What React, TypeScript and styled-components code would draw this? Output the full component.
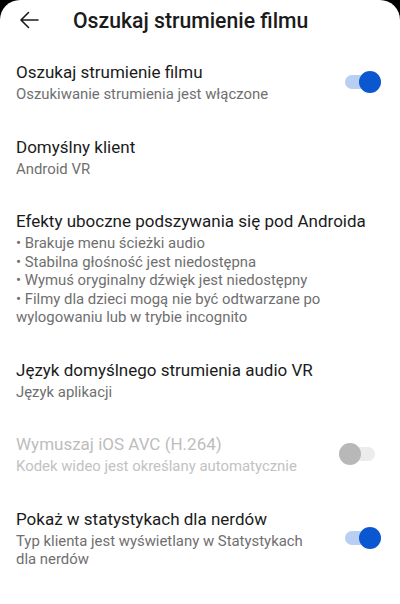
import { createGlobalStyle, styled } from "styled-components";

const GlobalStyle = createGlobalStyle`
  html, body {
    margin: 0;
    padding: 0;
    background: #000;
  }
  body {
    font-family: Roboto, "Noto Sans", "Liberation Sans", sans-serif;
  }
`;

interface Setting {
  title: string;
  lines: string[];
  toggle?: boolean;
  disabled?: boolean;
}

const settings: Setting[] = [
  {
    title: "Oszukaj strumienie filmu",
    lines: ["Oszukiwanie strumienia jest włączone"],
    toggle: true,
  },
  { title: "Domyślny klient", lines: ["Android VR"] },
  {
    title: "Efekty uboczne podszywania się pod Androida",
    lines: [
      "• Brakuje menu ścieżki audio",
      "• Stabilna głośność jest niedostępna",
      "• Wymuś oryginalny dźwięk jest niedostępny",
      "• Filmy dla dzieci mogą nie być odtwarzane po wylogowaniu lub w trybie incognito",
    ],
  },
  { title: "Język domyślnego strumienia audio VR", lines: ["Język aplikacji"] },
  {
    title: "Wymuszaj iOS AVC (H.264)",
    lines: ["Kodek wideo jest określany automatycznie"],
    toggle: false,
    disabled: true,
  },
  {
    title: "Pokaż w statystykach dla nerdów",
    lines: ["Typ klienta jest wyświetlany w Statystykach dla nerdów"],
    toggle: true,
  },
];

export default function App() {
  return (
    <>
      <GlobalStyle />
      <Screen>
        <Header>
          <BackButton>
            <svg width="20" height="20" viewBox="0 0 20 20" fill="none">
              <path
                d="M19 10H2M9.5 2.5L2 10l7.5 7.5"
                stroke="#1b1b1b"
                strokeWidth="1.6"
                strokeLinecap="round"
                strokeLinejoin="round"
              />
            </svg>
          </BackButton>
          <HeaderTitle>Oszukaj strumienie filmu</HeaderTitle>
        </Header>
        <List>
          {settings.map((s) => (
            <Row key={s.title}>
              <Texts>
                <Title $disabled={s.disabled}>{s.title}</Title>
                {s.lines.map((l) => (
                  <Summary key={l} $disabled={s.disabled}>
                    {l}
                  </Summary>
                ))}
              </Texts>
              {s.toggle !== undefined && (
                <Switch>
                  <Track $on={s.toggle} $disabled={s.disabled} />
                  <Thumb $on={s.toggle} $disabled={s.disabled} />
                </Switch>
              )}
            </Row>
          ))}
        </List>
      </Screen>
    </>
  );
}

const Screen = styled.div`
  background: #fff;
  min-height: 100vh;
  border-radius: 20px 20px 0 0;
  overflow: hidden;
`;

const Header = styled.div`
  height: 40px;
  display: flex;
  align-items: center;
`;

const BackButton = styled.div`
  width: 20px;
  height: 20px;
  margin-left: 19px;
  margin-right: 34px;
  display: flex;
`;

const HeaderTitle = styled.div`
  font-size: 21.2px;
  font-weight: 500;
  color: #1b1b1b;
`;

const List = styled.div`
  padding-top: 5px;
  display: flex;
  flex-direction: column;
`;

const Row = styled.div`
  display: flex;
  align-items: center;
  padding: 16px 19px 16px 16px;
  gap: 20px;
`;

const Texts = styled.div`
  flex: 1;
  display: flex;
  flex-direction: column;
`;

const Title = styled.div<{ $disabled?: boolean }>`
  font-size: 17px;
  line-height: 22px;
  margin-bottom: 2px;
  color: ${(p) => (p.$disabled ? "#bdbdbd" : "#1b1b1b")};
`;

const Summary = styled.div<{ $disabled?: boolean }>`
  font-size: 14.9px;
  line-height: 18.5px;
  color: ${(p) => (p.$disabled ? "#c2c2c2" : "#6f6f6f")};
`;

const Switch = styled.div`
  position: relative;
  width: 42px;
  height: 22px;
  flex-shrink: 0;
  display: flex;
  align-items: center;
  justify-content: center;
`;

const Track = styled.div<{ $on?: boolean; $disabled?: boolean }>`
  width: 30px;
  height: 14px;
  border-radius: 7px;
  background: ${(p) => (p.$disabled ? "#ececec" : p.$on ? "#b8cef3" : "#ddd")};
`;

const Thumb = styled.div<{ $on?: boolean; $disabled?: boolean }>`
  position: absolute;
  top: 0;
  ${(p) => (p.$on ? "right: 0;" : "left: 0;")}
  width: 22px;
  height: 22px;
  border-radius: 50%;
  background: ${(p) => (p.$disabled ? "#b8b8b8" : p.$on ? "#0b57d0" : "#fff")};
`;
